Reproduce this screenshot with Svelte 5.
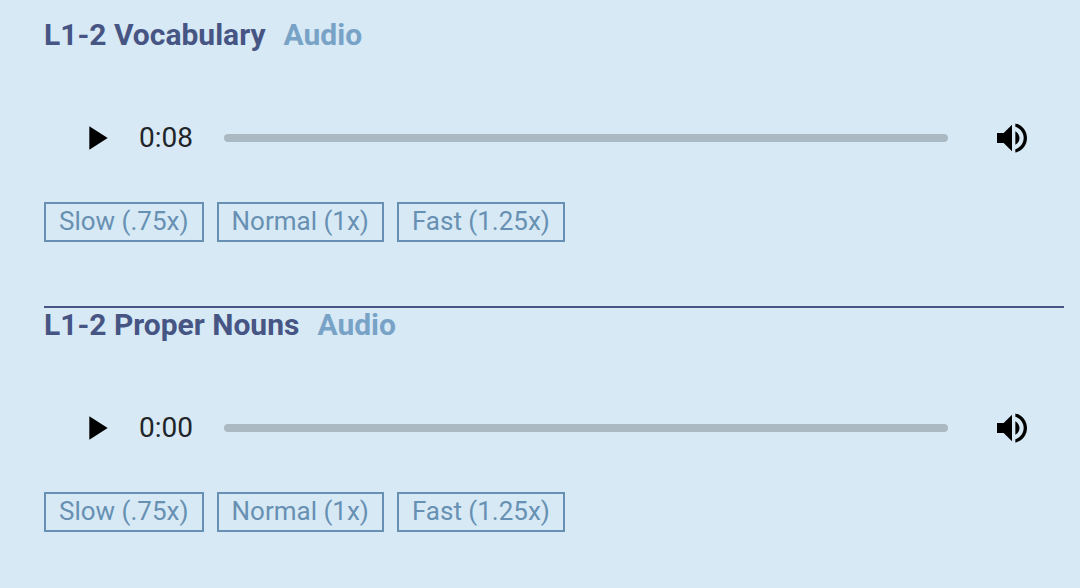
<script lang="ts">
  type Track = { id: string; title: string; time: string };

  const tracks: Track[] = [
    { id: 'vocabulary', title: 'L1-2 Vocabulary', time: '0:08' },
    { id: 'proper-nouns', title: 'L1-2 Proper Nouns', time: '0:00' },
  ];

  const speeds = [
    { label: 'Slow (.75x)', rate: 0.75 },
    { label: 'Normal (1x)', rate: 1 },
    { label: 'Fast (1.25x)', rate: 1.25 },
  ];

  let rates = $state<Record<string, number>>({});
</script>

<main>
  {#each tracks as track (track.id)}
    <section class="track">
      <h2>{track.title} <a href="#{track.id}">Audio</a></h2>

      <div class="player" id={track.id}>
        <button class="icon" aria-label="Play">
          <svg viewBox="0 0 24 24"><path d="M8 5v14l11-7z" /></svg>
        </button>
        <span class="time">{track.time}</span>
        <input type="range" min="0" max="100" value="0" aria-label="Seek {track.title}" />
        <button class="icon" aria-label="Mute">
          <svg viewBox="0 0 24 24">
            <path
              d="M3 9v6h4l5 5V4L7 9H3zm13.5 3c0-1.77-1.02-3.29-2.5-4.03v8.05c1.48-.73 2.5-2.25 2.5-4.02zM14 3.23v2.06c2.89.86 5 3.54 5 6.71s-2.11 5.85-5 6.71v2.06c4.01-.91 7-4.49 7-8.77s-2.99-7.86-7-8.77z"
            />
          </svg>
        </button>
      </div>

      <div class="speeds">
        {#each speeds as { label, rate }}
          <button
            aria-pressed={rates[track.id] === rate}
            onclick={() => (rates[track.id] = rate)}>{label}</button>
        {/each}
      </div>
    </section>
  {/each}
</main>

<style>
  :global(body) {
    background: #d7e9f5;
    font-family: Roboto, sans-serif;
  }
  main {
    padding: 18px 16px 0 44px;
  }
  .track + .track {
    margin-top: 64px;
    border-top: 2px solid #465583;
  }
  h2 {
    display: flex;
    gap: 18px;
    margin: 0;
    font-size: 30px;
    font-weight: 700;
    line-height: 34px;
    color: #465583;
  }
  a {
    color: #78a3c7;
    text-decoration: none;
  }
  button {
    margin: 0;
    border: 0;
    background: none;
    font-family: inherit;
    cursor: pointer;
  }
  .player {
    display: flex;
    align-items: center;
    height: 108px;
    margin-top: 32px;
    padding: 0 32px;
    border-radius: 54px;
  }
  .icon {
    flex: none;
    width: 40px;
    height: 40px;
    padding: 0;
  }
  .icon svg {
    display: block;
    width: 100%;
    height: 100%;
  }
  .time {
    margin-left: 23px;
    font-size: 28px;
    line-height: 34px;
    color: #212529;
    text-shadow: 0 0 20px rgba(255, 255, 255, 0.4);
  }
  input {
    appearance: none;
    flex: 1;
    min-width: 0;
    height: 8px;
    margin: 0 44px 0 31px;
    border-radius: 4px;
    background: #abb9c2;
  }
  input::-webkit-slider-thumb {
    appearance: none;
    width: 8px;
    height: 8px;
    background: transparent;
  }
  .speeds {
    display: flex;
    flex-wrap: wrap;
    gap: 13px;
    margin-top: 10px;
  }
  .speeds button {
    padding: 0 13px 2px;
    border: 2px solid #6790b2;
    font-size: 26px;
    line-height: 34px;
    color: #6790b2;
  }
</style>
